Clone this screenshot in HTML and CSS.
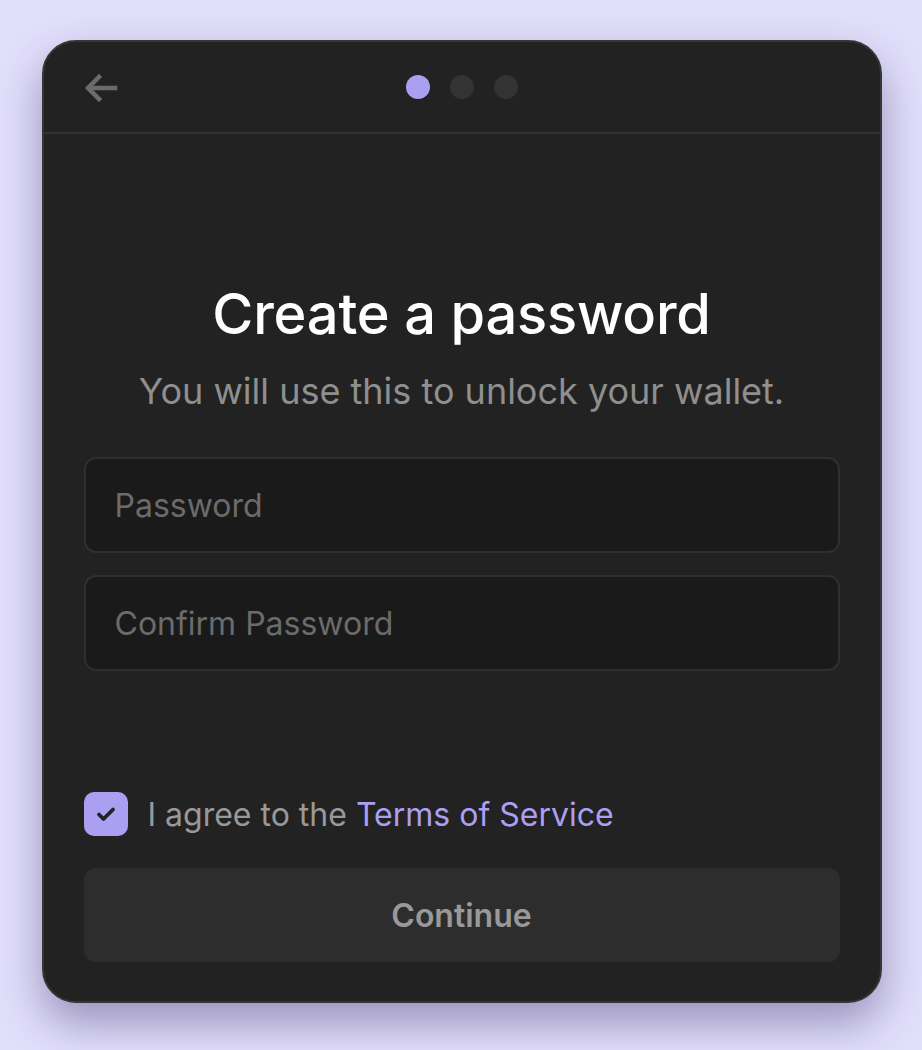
FILE: index.html
```html
<!DOCTYPE html>
<html>
<head>
    <title>Create a password</title>
    <link rel="stylesheet" href="styles.css">
</head>
<body>
    <div class="card">
        <div class="topbar">
            <button class="back" aria-label="Back">
                <svg width="34" height="28" viewBox="0 0 34 28" fill="none">
                    <path d="M31 14H5M15 3L4 14l11 11" stroke="#6b6b6b" stroke-width="4.5" stroke-linecap="square"/>
                </svg>
            </button>
            <div class="steps">
                <span class="dot active"></span>
                <span class="dot"></span>
                <span class="dot"></span>
            </div>
        </div>
        <div class="content">
            <h1>Create a password</h1>
            <p class="subtitle">You will use this to unlock your wallet.</p>
            <input type="password" class="field" placeholder="Password">
            <input type="password" class="field" placeholder="Confirm Password">
            <div class="footer">
                <label class="agree">
                    <span class="checkbox">
                        <svg width="20" height="16" viewBox="0 0 20 16" fill="none">
                            <path d="M3 8.5l4.5 4.5L17 3.5" stroke="#222" stroke-width="3.8" stroke-linecap="round" stroke-linejoin="round"/>
                        </svg>
                    </span>
                    <span>I agree to the <a href="#">Terms of Service</a></span>
                </label>
                <button class="continue">Continue</button>
            </div>
        </div>
    </div>
</body>
</html>
```

FILE: styles.css
```css
html {
    background-color: #e2dffb;
}
body {
    margin: 0;
    min-height: 100vh;
    font-family: Inter, "Noto Sans", sans-serif;
    display: flex;
    justify-content: center;
    align-items: flex-start;
    padding: 40px 0 0 1px;
    box-sizing: border-box;
}
.card {
    width: 836px;
    height: 959px;
    background: #222222;
    border: 2px solid #363636;
    border-radius: 34px;
    box-shadow: 0 20px 44px rgba(50, 40, 100, 0.42);
    display: flex;
    flex-direction: column;
    overflow: hidden;
}
.topbar {
    height: 90px;
    border-bottom: 2px solid #323232;
    display: flex;
    align-items: center;
    justify-content: center;
    position: relative;
    flex-shrink: 0;
}
.back {
    position: absolute;
    left: 40px;
    top: 32px;
    background: none;
    border: none;
    padding: 0;
    cursor: pointer;
    display: flex;
}
.steps {
    display: flex;
    gap: 20px;
}
.dot {
    width: 24px;
    height: 24px;
    border-radius: 50%;
    background: #333333;
}
.dot.active {
    background: #ab9ff2;
}
.content {
    flex: 1;
    display: flex;
    flex-direction: column;
    padding: 0 40px 39px;
}
h1 {
    margin: 148px 0 0;
    color: #ffffff;
    font-size: 56px;
    font-weight: 500;
    line-height: 64px;
    text-align: center;
    letter-spacing: -0.2px;
}
.subtitle {
    margin: 23px 0 44px;
    color: #8f8f8f;
    font-size: 36px;
    line-height: 44px;
    text-align: center;
}
.field {
    height: 96px;
    box-sizing: border-box;
    background: #1a1a1a;
    border: 2px solid #2f2f2f;
    border-radius: 12px;
    padding: 0 29px;
    font-family: inherit;
    font-size: 32px;
    color: #ffffff;
    margin-bottom: 22px;
    outline: none;
}
.field::placeholder {
    color: #6b6b6b;
}
.footer {
    margin-top: auto;
}
.agree {
    display: flex;
    align-items: center;
    gap: 20px;
    color: #999999;
    font-size: 32px;
    margin-bottom: 32px;
}
.agree a {
    color: #ab9ff2;
    text-decoration: none;
}
.checkbox {
    width: 44px;
    height: 44px;
    border-radius: 10px;
    background: #ab9ff2;
    display: flex;
    align-items: center;
    justify-content: center;
}
.continue {
    width: 100%;
    height: 94px;
    border: none;
    border-radius: 12px;
    background: #2d2d2d;
    color: #999999;
    font-family: inherit;
    font-size: 32px;
    font-weight: 600;
    cursor: pointer;
}
```
